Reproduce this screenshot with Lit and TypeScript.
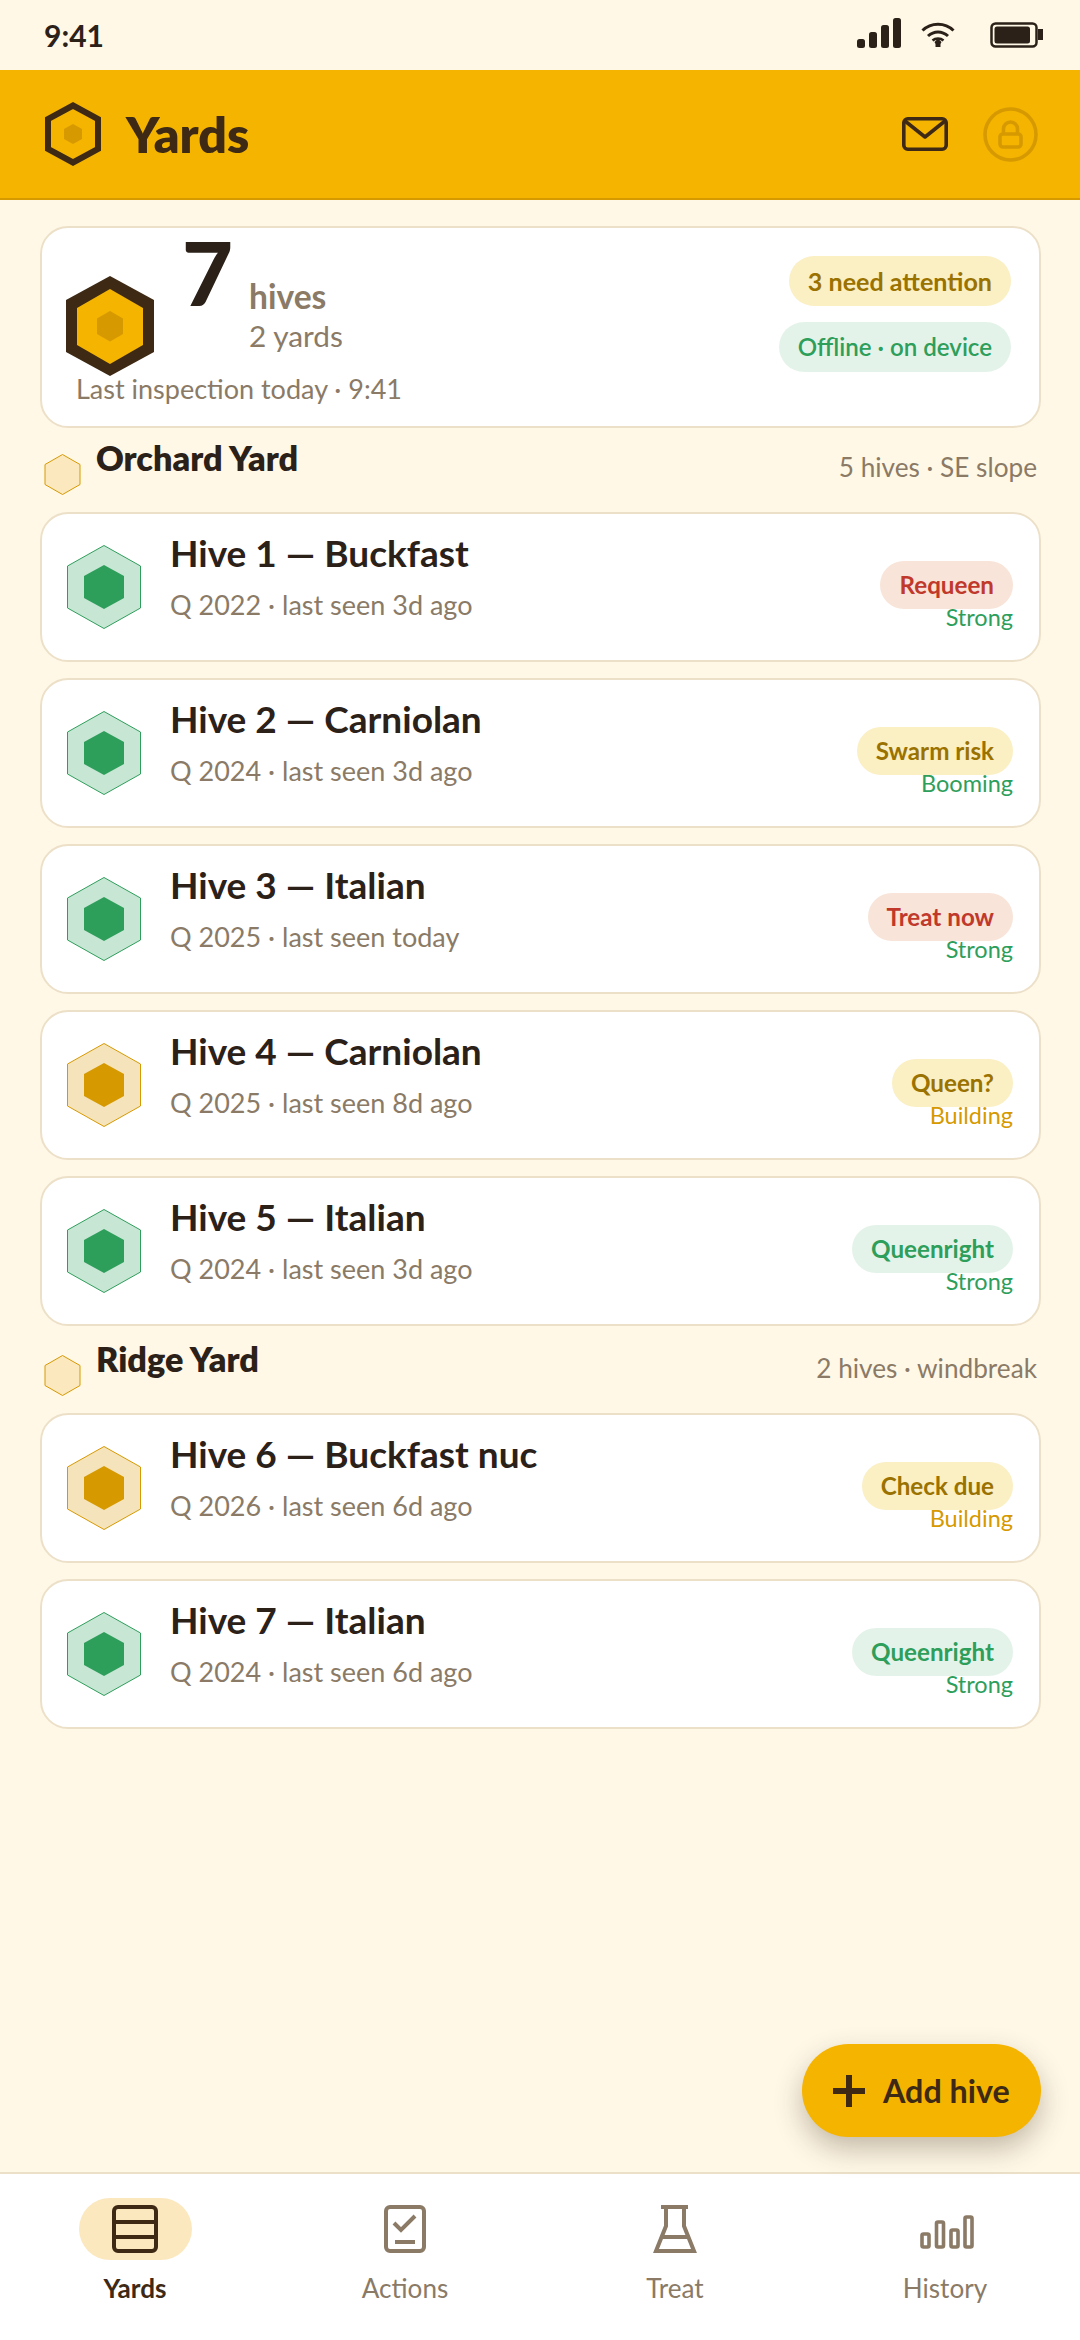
import { LitElement, html, css } from 'lit';
import { customElement } from 'lit/decorators.js';

type Tone = 'amber' | 'green' | 'red';

interface Hive {
  name: string;
  sub: string;
  badge: string;
  tone: Tone;
  state: string;
  good: boolean;
}

const orchard: Hive[] = [
  { name: 'Hive 1 — Buckfast', sub: 'Q 2022 · last seen 3d ago', badge: 'Requeen', tone: 'red', state: 'Strong', good: true },
  { name: 'Hive 2 — Carniolan', sub: 'Q 2024 · last seen 3d ago', badge: 'Swarm risk', tone: 'amber', state: 'Booming', good: true },
  { name: 'Hive 3 — Italian', sub: 'Q 2025 · last seen today', badge: 'Treat now', tone: 'red', state: 'Strong', good: true },
  { name: 'Hive 4 — Carniolan', sub: 'Q 2025 · last seen 8d ago', badge: 'Queen?', tone: 'amber', state: 'Building', good: false },
  { name: 'Hive 5 — Italian', sub: 'Q 2024 · last seen 3d ago', badge: 'Queenright', tone: 'green', state: 'Strong', good: true },
];

const ridge: Hive[] = [
  { name: 'Hive 6 — Buckfast nuc', sub: 'Q 2026 · last seen 6d ago', badge: 'Check due', tone: 'amber', state: 'Building', good: false },
  { name: 'Hive 7 — Italian', sub: 'Q 2024 · last seen 6d ago', badge: 'Queenright', tone: 'green', state: 'Strong', good: true },
];

const hiveIcon = (good: boolean) => html`
  <svg class="hive-hex ${good ? 'good' : 'warn'}" width="74" height="84" viewBox="0 0 74 84">
    <polygon class="outer" points="37,0.5 73.5,21 73.5,63 37,83.5 0.5,63 0.5,21" />
    <polygon class="inner" points="37,20 57,31 57,53 37,64 17,53 17,31" />
  </svg>
`;

const yardHex = html`
  <svg class="yard-hex" width="37" height="41" viewBox="0 0 37 41">
    <polygon points="18.5,0.5 36,10.5 36,30.5 18.5,40.5 1,30.5 1,10.5" fill="#fce8bf" stroke="#d69900" stroke-width="1" />
  </svg>
`;

@customElement('app-root')
export class AppRoot extends LitElement {
  static styles = css`
    :host {
      display: block;
      width: 1080px;
      height: 2340px;
      font-family: Lato, 'Noto Sans', sans-serif;
      color: #2b2118;
      background: #fff8e7;
    }
    .page {
      position: relative;
      display: flex;
      flex-direction: column;
      height: 2340px;
      overflow: hidden;
    }
    svg {
      display: block;
      flex: none;
    }
    .status {
      display: flex;
      align-items: center;
      justify-content: space-between;
      height: 70px;
      padding: 0 37px 0 44px;
      box-sizing: border-box;
      font-size: 30px;
      font-weight: 700;
    }
    .status-icons {
      display: flex;
      align-items: center;
    }
    .signal {
      margin-top: -4px;
    }
    .wifi {
      margin-left: 20px;
    }
    .battery {
      margin-left: 35px;
    }
    .appbar {
      display: flex;
      align-items: center;
      height: 130px;
      box-sizing: border-box;
      padding: 0 42px 0 45px;
      background: #f5b400;
      border-bottom: 2px solid #d69900;
      color: #3d2914;
    }
    .appbar h1 {
      margin: 0 0 0 25px;
      flex: 1;
      font-size: 50px;
      font-weight: 800;
      line-height: 60px;
    }
    .lock {
      margin-left: 35px;
    }
    .main {
      flex: 1;
      padding: 26px 39px 0 40px;
    }
    .summary {
      height: 202px;
      box-sizing: border-box;
      display: flex;
      justify-content: space-between;
      background: #fff;
      border: 2px solid #ede0c8;
      border-radius: 28px;
    }
    .summary-main {
      padding-left: 24px;
    }
    .summary-top {
      display: flex;
      height: 144px;
    }
    .big-hex {
      margin-top: 48px;
    }
    .count {
      margin: 0 0 0 28px;
      font-size: 88px;
      font-weight: 900;
      line-height: 88px;
      width: 67px;
    }
    .labels {
      margin-top: 49px;
      font-size: 29.8px;
      line-height: 39px;
      color: #8a7a66;
    }
    .labels b {
      display: block;
      font-size: 33.6px;
      font-weight: 700;
    }
    .last {
      margin: 0 0 0 10px;
      font-size: 27px;
      line-height: 34px;
      color: #8a7a66;
    }
    .summary-tags {
      display: flex;
      flex-direction: column;
      align-items: flex-end;
      gap: 16px;
      padding: 28px 28px 0 0;
    }
    .summary-tags .pill {
      height: 50px;
      line-height: 50px;
      font-size: 25.1px;
    }
    .pill {
      display: block;
      height: 48px;
      line-height: 48px;
      padding: 0 19px;
      border-radius: 999px;
      font-size: 24.2px;
      font-weight: 700;
      white-space: nowrap;
    }
    .pill.amber {
      background: #fbefc4;
      color: #9a7200;
    }
    .pill.green {
      background: #e4f3e9;
      color: #2e9e5b;
    }
    .pill.red {
      background: #f8e4d8;
      color: #c0392b;
    }
    .summary-tags .pill.thin {
      font-size: 24.1px;
      font-weight: 600;
    }
    .yard {
      display: flex;
      height: 84px;
      padding: 6px 4px 0 4px;
      box-sizing: border-box;
    }
    .yard-hex {
      margin-top: 20px;
    }
    .yard h2 {
      flex: 1;
      margin: 4px 0 0 15px;
      font-size: 34.2px;
      font-weight: 800;
      line-height: 40px;
    }
    .yard span {
      margin-top: 16px;
      font-size: 26.2px;
      line-height: 34px;
      color: #8a7a66;
    }
    .group {
      display: flex;
      flex-direction: column;
      gap: 16px;
      padding-bottom: 3px;
    }
    .hive {
      display: flex;
      height: 150px;
      box-sizing: border-box;
      background: #fff;
      border: 2px solid #ede0c8;
      border-radius: 28px;
      padding: 0 26px 0 25px;
      align-items: center;
    }
    .hive-hex .outer {
      stroke-width: 1;
    }
    .hive-hex.good .outer {
      fill: #c8e6d4;
      stroke: #2e9e5b;
    }
    .hive-hex.good .inner {
      fill: #2e9e5b;
    }
    .hive-hex.warn .outer {
      fill: #f5e4bb;
      stroke: #d69900;
    }
    .hive-hex.warn .inner {
      fill: #d69900;
    }
    .hive-text {
      flex: 1;
      margin: -23px 0 0 29px;
    }
    .hive-text h3 {
      margin: 0;
      font-size: 37px;
      font-weight: 700;
      line-height: 48px;
    }
    .hive-text p {
      margin: 10px 0 0;
      font-size: 27px;
      line-height: 36px;
      color: #8a7a66;
    }
    .hive-side {
      display: flex;
      flex-direction: column;
      align-items: flex-end;
      margin-top: 18px;
    }
    .state {
      margin-top: -7px;
      font-size: 23.5px;
      line-height: 30px;
    }
    .state.good {
      color: #2e9e5b;
    }
    .state.warn {
      color: #d69900;
    }
    .fab {
      position: absolute;
      left: 802px;
      top: 2044px;
      width: 239px;
      height: 93px;
      box-sizing: border-box;
      padding-left: 31px;
      display: flex;
      align-items: center;
      gap: 18px;
      border-radius: 47px;
      background: #f5b400;
      color: #3d2914;
      font-size: 32.3px;
      font-weight: 700;
      box-shadow: 0 12px 28px rgba(61, 41, 20, 0.3);
    }
    .nav {
      display: grid;
      grid-template-columns: repeat(4, 1fr);
      height: 168px;
      box-sizing: border-box;
      padding-top: 24px;
      background: #fff;
      border-top: 2px solid #ede0c8;
    }
    .tab {
      display: flex;
      flex-direction: column;
      align-items: center;
      font-size: 26.1px;
      line-height: 34px;
      color: #8a7a66;
    }
    .tab.on {
      color: #3d2914;
      font-weight: 700;
    }
    .tab-icon {
      display: flex;
      align-items: center;
      justify-content: center;
      width: 113px;
      height: 62px;
      margin-bottom: 11px;
      border-radius: 31px;
    }
    .tab.on .tab-icon {
      background: #fce8bf;
    }
    .bars {
      margin: 6px 0 0 3px;
    }
  `;

  private hiveCard(h: Hive) {
    return html`
      <article class="hive">
        ${hiveIcon(h.good)}
        <div class="hive-text">
          <h3>${h.name}</h3>
          <p>${h.sub}</p>
        </div>
        <div class="hive-side">
          <span class="pill ${h.tone}">${h.badge}</span>
          <span class="state ${h.good ? 'good' : 'warn'}">${h.state}</span>
        </div>
      </article>
    `;
  }

  render() {
    return html`
      <div class="page">
        <div class="status">
          <span>9:41</span>
          <div class="status-icons">
            <svg class="signal" width="44" height="30" viewBox="0 0 44 30" fill="#2b2118">
              <rect x="0" y="21" width="8" height="9" rx="2.5" />
              <rect x="12" y="14" width="8" height="16" rx="2.5" />
              <rect x="24" y="7" width="8" height="23" rx="2.5" />
              <rect x="36" y="0" width="8" height="30" rx="2.5" />
            </svg>
            <svg class="wifi" width="34" height="28" viewBox="0 0 34 28" fill="none" stroke="#2b2118" stroke-width="3">
              <path d="M1.5 9.5C10 1 24 1 32.5 9.5" />
              <path d="M7 15C13 9.5 21 9.5 27 15" />
              <path d="M11.5 19.5C14.5 16.8 19.5 16.8 22.5 19.5" stroke-width="2.5" />
              <path d="M13.5 21L17 17.5 20.5 21 19.5 23V26H14.5V23Z" fill="#2b2118" stroke="none" />
            </svg>
            <svg class="battery" width="53" height="26" viewBox="0 0 53 26">
              <rect x="1.5" y="1.5" width="45" height="23" rx="4" fill="none" stroke="#2b2118" stroke-width="2.5" />
              <rect x="4.5" y="4.5" width="35.5" height="17" rx="2.5" fill="#2b2118" />
              <rect x="48" y="7" width="5" height="11" fill="#2b2118" />
            </svg>
          </div>
        </div>

        <header class="appbar">
          <svg width="56" height="66" viewBox="0 0 56 66">
            <polygon points="28,4.5 53,18 53,48 28,61.5 3,48 3,18" fill="none" stroke="#3d2914" stroke-width="6" />
            <polygon points="28,23 37,28 37,38 28,43 19,38 19,28" fill="#d69900" />
          </svg>
          <h1>Yards</h1>
          <svg width="46" height="34" viewBox="0 0 46 34" fill="none" stroke="#3d2914" stroke-width="3.6" stroke-linejoin="round">
            <rect x="1.8" y="1.8" width="42.4" height="30.4" rx="4" />
            <path d="M3 4L23 20 43 4" />
          </svg>
          <svg class="lock" width="55" height="55" viewBox="0 0 55 55" fill="none" stroke="#d69900" stroke-width="3.6">
            <circle cx="27.5" cy="27.5" r="25.5" />
            <rect x="17" y="27" width="21" height="13" rx="3" />
            <path d="M20.5 27V22a7 7 0 0 1 14 0V27" />
          </svg>
        </header>

        <main class="main">
          <section class="summary">
            <div class="summary-main">
              <div class="summary-top">
                <svg class="big-hex" width="88" height="100" viewBox="0 0 88 100">
                  <polygon points="44,0 88,24 88,76 44,100 0,76 0,24" fill="#3d2914" />
                  <polygon points="44,13 77,32 77,69 44,88 11,69 11,32" fill="#f5b400" />
                  <polygon points="44,35 57,42.5 57,58 44,65.5 31,58 31,42.5" fill="#d69900" />
                </svg>
                <div class="count">7</div>
                <div class="labels"><b>hives</b>2 yards</div>
              </div>
              <p class="last">Last inspection today · 9:41</p>
            </div>
            <div class="summary-tags">
              <span class="pill amber">3 need attention</span>
              <span class="pill green thin">Offline · on device</span>
            </div>
          </section>

          <div class="yard">
            ${yardHex}
            <h2>Orchard Yard</h2>
            <span>5 hives · SE slope</span>
          </div>
          <div class="group">${orchard.map((h) => this.hiveCard(h))}</div>

          <div class="yard">
            ${yardHex}
            <h2>Ridge Yard</h2>
            <span>2 hives · windbreak</span>
          </div>
          <div class="group">${ridge.map((h) => this.hiveCard(h))}</div>
        </main>

        <div class="fab">
          <svg width="32" height="32" viewBox="0 0 32 32" stroke="#3d2914" stroke-width="6">
            <path d="M0 16H32M16 0V32" />
          </svg>
          Add hive
        </div>

        <nav class="nav">
          <div class="tab on">
            <div class="tab-icon">
              <svg width="46" height="48" viewBox="0 0 46 48" fill="none" stroke="#3d2914" stroke-width="4">
                <rect x="2" y="2" width="42" height="44" rx="4" />
                <path d="M2 17H44M2 32H44" />
              </svg>
            </div>
            Yards
          </div>
          <div class="tab">
            <div class="tab-icon">
              <svg width="42" height="48" viewBox="0 0 42 48" fill="none" stroke="#8a7a66" stroke-width="4">
                <rect x="2" y="2" width="38" height="44" rx="4" />
                <path d="M10 18L17 25 31 11" />
                <path d="M11 37H31" />
              </svg>
            </div>
            Actions
          </div>
          <div class="tab">
            <div class="tab-icon">
              <svg width="44" height="50" viewBox="0 0 44 50" fill="none" stroke="#8a7a66" stroke-width="4">
                <path d="M8 3H35M13 3V22L3 47H41L31 22V3" />
                <path d="M9 33H35" />
              </svg>
            </div>
            Treat
          </div>
          <div class="tab">
            <div class="tab-icon">
              <svg class="bars" width="54" height="34" viewBox="0 0 54 34" fill="none" stroke="#8a7a66" stroke-width="3.6">
                <rect x="2" y="19" width="7" height="13" rx="1.5" />
                <rect x="16.5" y="7" width="7" height="25" rx="1.5" />
                <rect x="31" y="15" width="7" height="17" rx="1.5" />
                <rect x="45" y="2" width="7" height="30" rx="1.5" />
              </svg>
            </div>
            History
          </div>
        </nav>
      </div>
    `;
  }
}
